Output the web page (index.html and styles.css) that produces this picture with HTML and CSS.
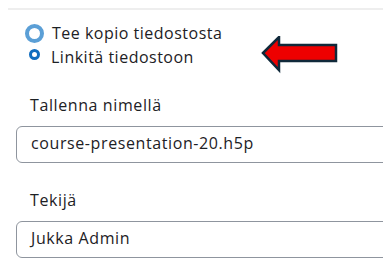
FILE: index.html
```html
<!DOCTYPE html>
<html>
<head>
  <link rel="stylesheet" href="styles.css">
</head>
<body>
  <div class="page">
    <hr class="divider">

    <!-- File reference options -->
    <div class="radio-group">
      <label class="radio-row">
        <span class="radio focused"></span>
        <span>Tee kopio tiedostosta</span>
      </label>
      <label class="radio-row">
        <span class="radio checked"></span>
        <span>Linkitä tiedostoon</span>
      </label>
      <svg class="arrow" width="80" height="40" viewBox="0 0 80 40">
        <polygon points="2,17 18,1 18,9 75,9 75,25 18,25 18,34" fill="#ee0000" stroke="#10293a" stroke-width="2.5" stroke-linejoin="miter"/>
      </svg>
    </div>

    <div class="form-group">
      <div class="label">Tallenna nimellä</div>
      <div class="input">course-presentation-20.h5p</div>
    </div>

    <div class="form-group">
      <div class="label">Tekijä</div>
      <div class="input">Jukka Admin</div>
    </div>
  </div>
</body>
</html>
```

FILE: styles.css
```css
body {
  margin: 0;
  font-family: "Open Sans", sans-serif;
  font-size: 16px;
  letter-spacing: 0.6px;
  color: #1d2125;
  background: #fff;
  overflow: hidden;
}

.page {
  padding-top: 8px;
}

.divider {
  margin: 0 0 0 8px;
  border: none;
  border-top: 2px solid #eeeeee;
}

.radio-group {
  position: relative;
  display: flex;
  flex-direction: column;
  gap: 2px;
  padding: 12px 0 0 25px;
}

.radio-row {
  display: flex;
  align-items: center;
  height: 22px;
  letter-spacing: 0.5px;
}

.radio {
  box-sizing: border-box;
  display: inline-block;
  border-radius: 50%;
}

.radio.focused {
  width: 19px;
  height: 19px;
  border: 4px solid #5b9fd6;
  margin-right: 8px;
}

.radio.checked {
  width: 11px;
  height: 11px;
  border: 3.5px solid #0f6cbf;
  margin: 0 11px 5px 4px;
}

.arrow {
  position: absolute;
  left: 261px;
  top: 26px;
}

.form-group {
  padding-left: 16px;
  margin-top: 26px;
}

.label {
  padding-left: 14px;
  line-height: 22px;
  margin-bottom: 10px;
}

.input {
  box-sizing: border-box;
  width: 420px;
  height: 37px;
  padding: 0 14px;
  line-height: 33px;
  border: 1px solid #8f959e;
  border-radius: 6px;
}
```
